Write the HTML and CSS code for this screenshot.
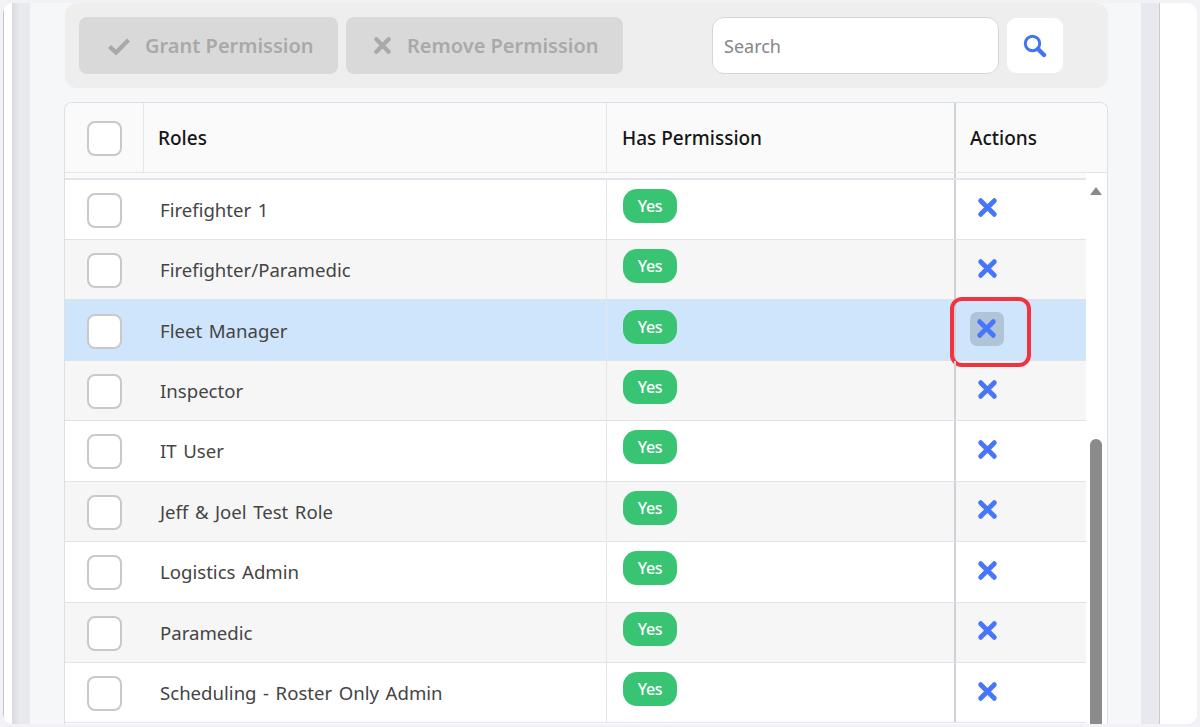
FILE: index.html
```html
<!DOCTYPE html>
<html lang="en">
<head>
<meta charset="utf-8">
<title>Role permissions</title>
<link rel="stylesheet" href="styles.css">
</head>
<body>
<svg class="defs" width="0" height="0" aria-hidden="true">
  <symbol id="x" viewBox="0 0 20 20"><path d="M3.5 3.5 16.5 16.5M16.5 3.5 3.5 16.5" fill="none" stroke="currentColor" stroke-width="4.6" stroke-linecap="round"/></symbol>
</svg>
<div class="frame">
  <div class="edge-left"></div>
  <div class="rail"></div>
  <main class="content">
    <div class="toolbar">
      <button class="btn btn-grant"><svg class="btn-check" viewBox="0 0 24 18"><path d="M2.5 9.5 9 15.5 21.5 3" fill="none" stroke="currentColor" stroke-width="4.4"/></svg>Grant Permission</button>
      <button class="btn btn-remove"><svg class="btn-x"><use href="#x"/></svg>Remove Permission</button>
      <div class="search"><span class="search-input">Search</span>
        <button class="search-btn"><svg viewBox="0 0 24 24" class="search-icon"><circle cx="9.5" cy="9.5" r="7.2" fill="none" stroke="currentColor" stroke-width="3"/><path d="M15 15 21 21" stroke="currentColor" stroke-width="4.4" stroke-linecap="round"/></svg></button>
      </div>
    </div>
    <div class="table">
      <div class="row head">
        <div class="c-check"><span class="box"></span></div>
        <div class="c-role">Roles</div>
        <div class="c-perm">Has Permission</div>
        <div class="c-act">Actions</div>
      </div>
      <div class="gap"></div>
      <div class="body">
        <div class="rows">
          <div class="row"><div class="c-check"><span class="box"></span></div><div class="c-role">Firefighter 1</div><div class="c-perm"><span class="yes">Yes</span></div><div class="c-act"><svg class="x"><use href="#x"/></svg></div></div>
          <div class="row alt"><div class="c-check"><span class="box"></span></div><div class="c-role">Firefighter/Paramedic</div><div class="c-perm"><span class="yes">Yes</span></div><div class="c-act"><svg class="x"><use href="#x"/></svg></div></div>
          <div class="row sel"><div class="c-check"><span class="box"></span></div><div class="c-role">Fleet Manager</div><div class="c-perm"><span class="yes">Yes</span></div><div class="c-act"><span class="chip"><svg class="x"><use href="#x"/></svg></span><span class="callout"></span></div></div>
          <div class="row alt"><div class="c-check"><span class="box"></span></div><div class="c-role">Inspector</div><div class="c-perm"><span class="yes">Yes</span></div><div class="c-act"><svg class="x"><use href="#x"/></svg></div></div>
          <div class="row"><div class="c-check"><span class="box"></span></div><div class="c-role">IT User</div><div class="c-perm"><span class="yes">Yes</span></div><div class="c-act"><svg class="x"><use href="#x"/></svg></div></div>
          <div class="row alt"><div class="c-check"><span class="box"></span></div><div class="c-role">Jeff &amp; Joel Test Role</div><div class="c-perm"><span class="yes">Yes</span></div><div class="c-act"><svg class="x"><use href="#x"/></svg></div></div>
          <div class="row"><div class="c-check"><span class="box"></span></div><div class="c-role">Logistics Admin</div><div class="c-perm"><span class="yes">Yes</span></div><div class="c-act"><svg class="x"><use href="#x"/></svg></div></div>
          <div class="row alt"><div class="c-check"><span class="box"></span></div><div class="c-role">Paramedic</div><div class="c-perm"><span class="yes">Yes</span></div><div class="c-act"><svg class="x"><use href="#x"/></svg></div></div>
          <div class="row"><div class="c-check"><span class="box"></span></div><div class="c-role">Scheduling - Roster Only Admin</div><div class="c-perm"><span class="yes">Yes</span></div><div class="c-act"><svg class="x"><use href="#x"/></svg></div></div>
        </div>
        <div class="scrollbar"><span class="arrow"></span><span class="thumb"></span></div>
      </div>
    </div>
  </main>
  <div class="rail-right"></div>
  <div class="edge-right"></div>
</div>
</body>
</html>
```

FILE: styles.css
```css
* { box-sizing: border-box; }
html, body { margin: 0; height: 100%; overflow: hidden; }
body {
  background: #f1f1f6;
  padding: 3px;
  font-family: "Noto Sans", sans-serif;
  color: #444;
}
.defs { position: absolute; }
.frame {
  display: flex;
  height: 721px;
  background: #fff;
  border-radius: 10px;
  overflow: hidden;
}
.edge-left { width: 9px; flex: none; border-left: 1px solid #c4c4c8; background: #fff; }
.rail {
  width: 52px; flex: none;
  background: linear-gradient(90deg, #d9dade 0, #e9eaee 8px, #e9eaee 18px, #f6f7f8 18px);
}
.content { width: 1044px; flex: none; background: #f6f7f8; }
.rail-right {
  width: 52px; flex: none;
  background: linear-gradient(90deg, #f6f7f8 33px, #e8e9ee 33px);
  border-right: 1px solid #c9c9ce;
}
.edge-right { flex: 1; background: #fff; }

.toolbar {
  height: 85px;
  margin-left: 1px;
  background: #eee;
  border-radius: 12px;
  display: flex;
  align-items: flex-start;
  padding: 14px 0 0 14px;
  gap: 8px;
}
.btn {
  height: 57px;
  border: 0;
  border-radius: 8px;
  background: #d9d9d9;
  color: #a9a9a9;
  font: 600 20px "Noto Sans", sans-serif;
  display: flex;
  align-items: center;
  padding: 0;
}
.btn-grant { width: 259px; padding-left: 28px; gap: 14px; }
.btn-remove { width: 277px; padding-left: 27px; gap: 15px; }
.btn-check { width: 24px; height: 18px; color: #a9a9a9; }
.btn-x { width: 19px; height: 19px; }
.search { margin-left: 81px; display: flex; gap: 8px; align-items: flex-start; }
.search-input {
  width: 287px; height: 57px;
  background: #fff;
  border: 1px solid #d6d6d6;
  border-radius: 12px;
  color: #85858a;
  font-size: 18px;
  display: flex;
  align-items: center;
  padding-left: 11px;
}
.search-btn {
  width: 56px; height: 55px; margin-top: 1px;
  border: 0; border-radius: 9px;
  background: #fff;
  color: #4473f5;
  display: flex; align-items: center; justify-content: center;
  padding: 0;
}
.search-icon { width: 24px; height: 24px; }

.table {
  margin-top: 14px;
  height: 700px;
  background: #fff;
  border: 1px solid #dcdfe4;
  border-bottom: 0;
  border-radius: 8px 8px 0 0;
  overflow: hidden;
}
.row {
  display: grid;
  grid-template-columns: 78px 463px 348px 1fr;
  height: 60.45px;
  font-size: 18.6px;
  word-spacing: 1.7px;
  border-bottom: 1px solid #e0e3ea;
  background: #fff;
}
.row > div { display: flex; align-items: center; }
.alt { background: #f6f6f7; }
.sel { background: #cfe5fb; }
.head {
  height: 70px;
  background: #fafafa;
  color: #151515;
  font-size: 19px;
  word-spacing: 0;
  font-weight: 500;
  border-bottom: 1px solid #e6e6e9;
}
.gap {
  height: 6.5px;
  background: #fafafa linear-gradient(#cfd1d6, #cfd1d6) no-repeat 889px 0 / 2px 100%;
  border-bottom: 2px solid #e2e5eb;
  margin-right: 21px;
}
.c-check { justify-content: center; padding: 2px 0 0 1px; }
.c-role { padding-left: 17px; }
.head .c-role { padding-left: 14px; border-left: 1px solid #e6e6e9; }
.c-perm { padding-left: 16px; border-left: 1px solid #e6e6e9; }
.head .c-perm { padding-left: 15px; }
.c-act {
  position: relative;
  padding-left: 14px;
  border-left: 2px solid #cfd1d6;
}
.row:not(.head) .c-act { padding-left: 20.5px; padding-bottom: 3px; }
.box {
  width: 35px; height: 35px;
  background: #fff;
  border: 2.5px solid #c9c9c9;
  border-radius: 8px;
}
.row:not(.head) .c-perm { padding-bottom: 7px; }
.yes {
  width: 54px; height: 34px;
  background: #38c473;
  color: #fff;
  border-radius: 14px;
  font-size: 16px;
  letter-spacing: -0.4px;
  font-weight: 500;
  display: flex; align-items: center; justify-content: center;
}
.x { width: 21px; height: 21px; color: #4876fa; display: block; }
.row.sel .c-act { padding-left: 13.5px; }
.chip {
  width: 34px; height: 34px;
  border-radius: 7px;
  background: #b0c4d8;
  display: flex; align-items: center; justify-content: center;
}
.callout {
  position: absolute;
  left: -6.5px; top: -3px;
  width: 81px; height: 70px;
  border: 4px solid #f2323f;
  border-radius: 12px;
}
.body { display: flex; height: 560px; overflow: hidden; }
.rows { width: 1021px; flex: none; }
.scrollbar {
  flex: 1;
  display: flex;
  flex-direction: column;
  align-items: center;
  justify-content: space-between;
  padding: 7px 1px 0 0;
  background: #fff;
}
.arrow {
  width: 0; height: 0;
  border-left: 6px solid transparent;
  border-right: 6px solid transparent;
  border-bottom: 8px solid #8b8b8b;
}
.thumb { width: 12px; height: 301px; background: #8b8b8b; border-radius: 6px 6px 0 0; }
```
